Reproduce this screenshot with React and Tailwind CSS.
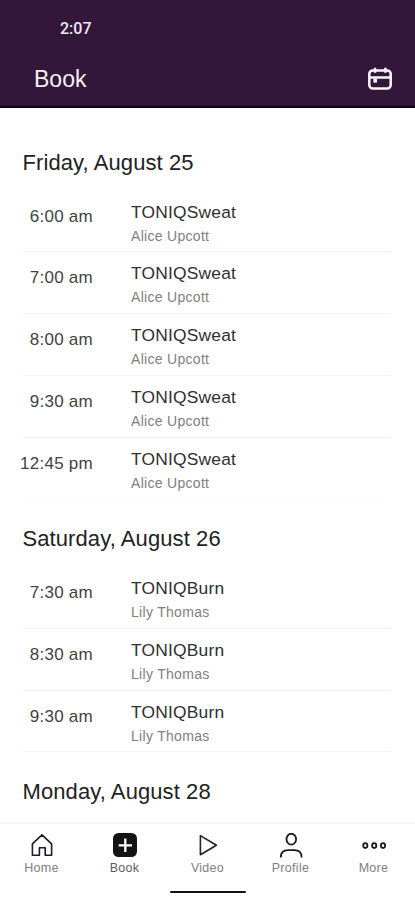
import React from "react";

const days = [
  {
    title: "Friday, August 25",
    className: "TONIQSweat",
    coach: "Alice Upcott",
    times: ["6:00 am", "7:00 am", "8:00 am", "9:30 am", "12:45 pm"],
  },
  {
    title: "Saturday, August 26",
    className: "TONIQBurn",
    coach: "Lily Thomas",
    times: ["7:30 am", "8:30 am", "9:30 am"],
  },
  { title: "Monday, August 28", times: [] },
];

const CalendarIcon = () => (
  <svg width="26" height="24" viewBox="0 0 26 24" fill="none" stroke="#fbf7fc" strokeWidth="2.5">
    <rect x="2.3" y="3.4" width="21.4" height="18.2" rx="3.6" />
    <path d="M2.3 10.4h21.4M8 .8v5M18.4 .8v5" />
    <rect x="6.4" y="11.6" width="3.6" height="4" fill="#fbf7fc" stroke="none" />
  </svg>
);

const HomeIcon = () => (
  <svg width="24" height="24" viewBox="0 0 24 24" fill="none" stroke="#1b1b2b" strokeWidth="1.6" strokeLinejoin="round">
    <path d="M2.4 10.8L12 1.8l9.6 9v11.4h-6.4v-7.4H9.4v7.4h-7z" />
  </svg>
);

const BookIcon = () => (
  <svg width="24" height="24" viewBox="0 0 24 24">
    <rect x="0" y="0" width="24" height="24" rx="5.5" fill="#141417" />
    <path d="M12.3 5.6v13.4M5.6 12.3H19" stroke="#fff" strokeWidth="2.3" />
  </svg>
);

const VideoIcon = () => (
  <svg width="24" height="24" viewBox="0 0 24 24" fill="none" stroke="#222229" strokeWidth="1.6" strokeLinejoin="round">
    <path d="M4.4 2.6v19.2L20.4 12.2z" />
  </svg>
);

const ProfileIcon = () => (
  <svg width="24" height="25" viewBox="0 0 24 25" fill="none" stroke="#1b1b2b" strokeWidth="1.8">
    <ellipse cx="12.3" cy="6.2" rx="4.8" ry="5.4" />
    <path d="M1.8 24.4c0-4.6 2.6-7.2 7.2-7.2h6.4c4.6 0 7.2 2.6 7.2 7.2" />
  </svg>
);

const MoreIcon = () => (
  <svg width="24" height="24" viewBox="0 0 24 24" fill="none" stroke="#1b1b1f" strokeWidth="1.8">
    <ellipse cx="3.3" cy="12.6" rx="2.1" ry="2.4" />
    <ellipse cx="12.2" cy="12.6" rx="2.1" ry="2.4" />
    <ellipse cx="21" cy="12.6" rx="2.1" ry="2.4" />
  </svg>
);

const tabs = [
  { label: "Home", Icon: HomeIcon },
  { label: "Book", Icon: BookIcon, active: true },
  { label: "Video", Icon: VideoIcon },
  { label: "Profile", Icon: ProfileIcon },
  { label: "More", Icon: MoreIcon },
];

const ClassRow = ({ time, name, coach, last }) => (
  <div className={`ml-[23px] mr-6 h-[61.8px] flex border-b ${last ? "border-[#fcfcfc]" : "border-[#f3f3f3]"}`}>
    <p className="-ml-[10px] w-[80px] shrink-0 pt-4 text-right text-[17px] leading-5 tracking-[0.25px] text-[#424242] whitespace-nowrap">
      {time}
    </p>
    <div className="ml-[38px] pt-[11px]">
      <p className="text-[17.4px] leading-5 tracking-[0.2px] text-[#303030]">{name}</p>
      <p className="mt-1.5 text-[14px] leading-4 tracking-[0.3px] text-[#808080]">{coach}</p>
    </div>
  </div>
);

const App = () => {
  return (
    <div className="w-full h-screen flex flex-col overflow-hidden bg-white font-['Liberation_Sans',sans-serif]">
      <header className="h-[108px] shrink-0 bg-[#32173b] border-b-2 border-[#0c0310] text-white">
        <p className="pt-[19px] pl-[60px] font-['Roboto',sans-serif] font-medium text-[16px] leading-5 text-[#eee8f0]">2:07</p>
        <div className="mt-[26px] pl-[34px] pr-[22px] flex items-center justify-between">
          <h1 className="text-[23px] leading-7 text-[#f5f0f6]">Book</h1>
          <CalendarIcon />
        </div>
      </header>

      <main className="flex-1 min-h-0 overflow-hidden pt-[41px]">
        {days.map((day) => (
          <section key={day.title} className="mb-[26px]">
            <h2 className="pl-[22.5px] h-[41.5px] text-[22px] leading-7 tracking-[0.09px] text-[#222]">{day.title}</h2>
            {day.times.map((time, i) => (
              <ClassRow
                key={time}
                time={time}
                name={day.className}
                coach={day.coach}
                last={day.title.startsWith("Friday") && i === day.times.length - 1}
              />
            ))}
          </section>
        ))}
      </main>

      <nav className="h-[78px] shrink-0 border-t-2 border-[#f7f7f7] flex flex-col">
        <div className="grid grid-cols-5 pt-[9px]">
          {tabs.map(({ label, Icon, active }) => (
            <button key={label} className="flex flex-col items-center">
              <span className="h-6">
                <Icon />
              </span>
              <span className={`mt-[3px] text-[12.5px] leading-4 tracking-[0.3px] ${active ? "text-[#5c5c5c]" : "text-[#808080]"}`}>
                {label}
              </span>
            </button>
          ))}
        </div>
        <div className="mx-auto mt-[15px] w-[76px] h-0.5 rounded-full bg-[#111]" />
      </nav>
    </div>
  );
};

export default App;
